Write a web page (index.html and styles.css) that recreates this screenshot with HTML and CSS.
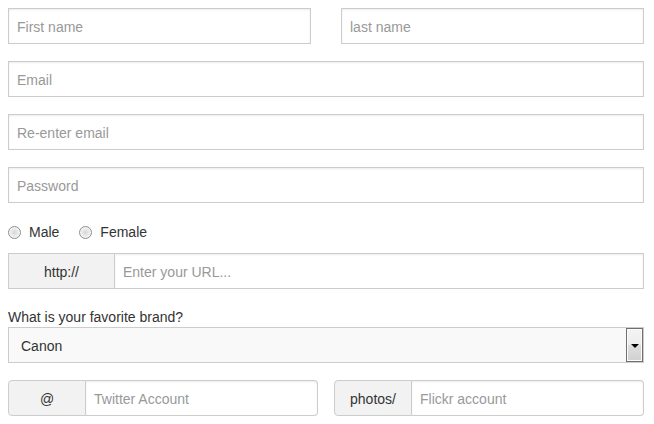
FILE: index.html
```html
<!DOCTYPE html>
<html>
<head>
<meta charset="utf-8">
<link rel="stylesheet" href="styles.css">
</head>
<body>
<form class="form">
  <div class="pair pair-names">
    <input class="field" type="text" placeholder="First name">
    <input class="field" type="text" placeholder="last name">
  </div>
  <input class="field spaced" type="text" placeholder="Email">
  <input class="field spaced" type="text" placeholder="Re-enter email">
  <input class="field spaced" type="password" placeholder="Password">
  <div class="radios">
    <label class="radio"><input class="radio-input" type="radio" name="gender"><span>Male</span></label>
    <label class="radio"><input class="radio-input" type="radio" name="gender"><span>Female</span></label>
  </div>
  <div class="group group-url">
    <span class="addon addon-url">http://</span>
    <input class="field field-in-group" type="text" placeholder="Enter your URL...">
  </div>
  <label class="label">What is your favorite brand?</label>
  <div class="select-wrap">
    <select class="select"><option>Canon</option><option>Nikon</option><option>Sony</option></select>
    <span class="select-btn"><span class="select-caret"></span></span>
  </div>
  <div class="pair pair-social">
    <div class="group group-round">
      <span class="addon addon-small">@</span>
      <input class="field field-in-group" type="text" placeholder="Twitter Account">
    </div>
    <div class="group group-round">
      <span class="addon addon-small">photos/</span>
      <input class="field field-in-group" type="text" placeholder="Flickr account">
    </div>
  </div>
</form>
</body>
</html>
```
FILE: styles.css
```css
* { box-sizing: border-box; }
html, body { background: #fff; }
body {
  margin: 8px;
  font-family: "Liberation Sans", Arial, sans-serif;
  font-size: 14px;
  color: #333;
}
.form {
  width: 636px;
  display: flex;
  flex-direction: column;
}
.field {
  display: block;
  width: 100%;
  height: 36px;
  margin: 0;
  padding: 1px 8px 0;
  border: 1px solid #cccccc;
  border-radius: 0;
  background: #fff;
  font-family: inherit;
  font-size: 14px;
  color: #333;
  box-shadow: inset 0 1px 2px rgba(0,0,0,0.08);
  outline: none;
}
.field::placeholder { color: #999; }
.spaced { margin-top: 17px; }
.pair {
  display: grid;
  grid-template-columns: 1fr 1fr;
}
.pair-names { column-gap: 30px; }
.pair-social { column-gap: 16px; margin-top: 17px; }

.radios {
  margin-top: 19px;
  height: 20px;
  display: flex;
  align-items: center;
  gap: 20px;
}
.radio {
  display: flex;
  align-items: center;
  gap: 8px;
  line-height: 20px;
}
.radio-input {
  -webkit-appearance: none;
  appearance: none;
  margin: 0;
  width: 13px;
  height: 13px;
  border-radius: 50%;
  border: 1px solid #8e8f8f;
  background: radial-gradient(circle at 50% 50%, #d6d6d6 0, #e6e6e6 35%, #f4f4f4 70%, #fcfcfc 100%);
  box-shadow: inset 0 0 0 1px #f2f2f2;
}

.group {
  display: flex;
  height: 36px;
}
.group-url { margin-top: 11px; }
.addon {
  flex: none;
  display: flex;
  align-items: center;
  justify-content: center;
  padding-top: 1px;
  background: #f2f2f2;
  border: 1px solid #cccccc;
  color: #333;
  height: 36px;
}
.addon-url { width: 107px; }
.addon-small { width: 78px; }
.field-in-group {
  flex: 1;
  border-left: none;
  height: 36px;
}
.group-round .addon { border-radius: 4px 0 0 4px; }
.group-round .field-in-group { border-radius: 0 4px 4px 0; }

.label {
  display: block;
  margin-top: 18px;
  line-height: 20px;
  color: #333;
}
.select-wrap {
  position: relative;
  height: 36px;
}
.select {
  -webkit-appearance: none;
  appearance: none;
  display: block;
  width: 100%;
  height: 36px;
  margin: 0;
  padding: 1px 12px 0;
  border: 1px solid #cccccc;
  border-radius: 0;
  background: #f9f9f9;
  font-family: inherit;
  font-size: 14px;
  color: #333;
  outline: none;
}
.select-btn {
  position: absolute;
  top: 1px;
  bottom: 1px;
  right: 1px;
  width: 17px;
  border: 1px solid #707070;
  background: linear-gradient(#f4f4f4 0%, #ececec 50%, #dedede 51%, #d0d0d0 100%);
  box-shadow: inset 0 0 0 1px #fbfbfb;
  display: flex;
  align-items: center;
  justify-content: center;
  pointer-events: none;
}
.select-caret {
  width: 0;
  height: 0;
  border-left: 4px solid transparent;
  border-right: 4px solid transparent;
  border-top: 4px solid #000;
  margin-top: 1px;
}
```
